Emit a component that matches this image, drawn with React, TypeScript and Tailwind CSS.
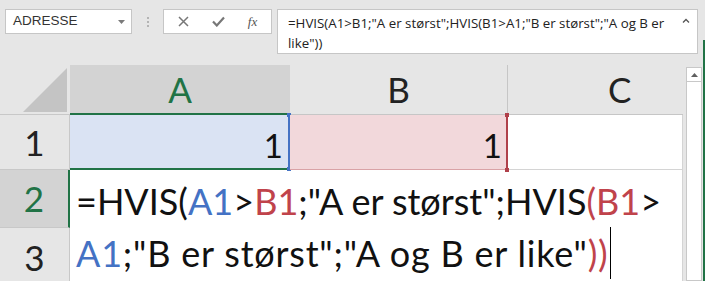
export default function App() {
  const blue = "text-[#4472c4]";
  const red = "text-[#c0434b]";

  return (
    <div className="flex h-[281px] w-[705px] overflow-hidden bg-[#e6e6e6] font-['Lato',sans-serif]">
      <div className="flex w-[703px] flex-col">
        {/* formula bar */}
        <div className="flex h-[65px] shrink-0 items-start pl-[5px] pt-[9px]">
          <div className="flex h-[25px] w-[127px] items-center justify-between border border-[#c6c6c6] bg-white pl-[7px] pr-[6px] font-['Liberation_Sans',sans-serif] text-[13.5px] text-[#333]">
            <span>ADRESSE</span>
            <svg width="7" height="4" viewBox="0 0 7 4">
              <path d="M0 0 L7 0 L3.5 4 Z" fill="#7a7a7a" />
            </svg>
          </div>
          <div className="flex h-[25px] w-[31px] flex-col items-center justify-center gap-[2px]">
            <span className="h-[2px] w-[2px] bg-[#b4b4b4]" />
            <span className="h-[2px] w-[2px] bg-[#b4b4b4]" />
            <span className="h-[2px] w-[2px] bg-[#b4b4b4]" />
          </div>
          <div className="flex h-[25px] w-[109px] items-center border border-[#c6c6c6] bg-white">
            <div className="flex w-[38px] justify-center">
              <svg width="11" height="11" viewBox="0 0 11 11">
                <path d="M1 1 L10 10 M10 1 L1 10" stroke="#777" strokeWidth="1.5" />
              </svg>
            </div>
            <div className="flex w-[32px] justify-center">
              <svg width="13" height="11" viewBox="0 0 13 11">
                <path d="M1 5.5 L4.8 9.5 L12 1.5" stroke="#777" strokeWidth="2.2" fill="none" />
              </svg>
            </div>
            <div className="flex w-[37px] justify-center font-['Liberation_Serif',serif] text-[13px] italic text-[#555]">
              fx
            </div>
          </div>
          <div className="ml-[5px] flex h-[45px] w-[421px] border border-[#c6c6c6] bg-white">
            <div className="flex-1 whitespace-nowrap pl-[10px] pt-[3px] font-['Open_Sans',sans-serif] text-[13.3px] leading-[20px] text-[#222]">
              <div>=HVIS(A1&gt;B1;"A er størst";HVIS(B1&gt;A1;"B er størst";"A og B er</div>
              <div>like"))</div>
            </div>
            <div className="flex w-[22px] justify-center pt-[8px]">
              <svg width="8" height="5" viewBox="0 0 8 5">
                <path d="M1 4.5 L4 1.5 L7 4.5" stroke="#555" strokeWidth="1.3" fill="none" />
              </svg>
            </div>
          </div>
        </div>

        {/* sheet */}
        <div className="flex flex-1">
          <div className="grid h-[216px] w-[683px] grid-cols-[70px_220px_218px_175px] grid-rows-[50px_55px_58px_58px] overflow-hidden bg-white">
            {/* header row */}
            <div className="flex items-end justify-end border-b border-[#c8c8c8] bg-[#e6e6e6] pb-[2px] pr-[3px]">
              <svg width="44" height="44" viewBox="0 0 44 44">
                <path d="M0 44 L44 0 L44 44 Z" fill="#c4c4c4" />
              </svg>
            </div>
            <div className="flex items-center justify-center border-b-2 border-[#217346] bg-[#d3d3d3] text-[35px] text-[#217346]">
              A
            </div>
            <div className="flex items-center justify-center border-b border-r border-[#c6c6c6] bg-[#e6e6e6] text-[35px] text-[#222]">
              B
            </div>
            <div className="flex items-center border-b border-[#c6c6c6] bg-[#e6e6e6] pl-[100px] text-[35px] text-[#222]">
              C
            </div>

            {/* row 1 */}
            <div className="flex items-center justify-center border-b border-r border-[#c8c8c8] bg-[#e6e6e6] text-[35px] text-[#222]">
              1
            </div>
            <div className="relative flex items-end justify-end border-b-2 border-r-2 border-b-[#217346] border-r-[#4472c4] bg-[#dae3f3] pb-[6px] pr-[5px] text-[33px] leading-none text-[#111]">
              1
              <span className="absolute -right-[3px] -top-[2px] h-[4px] w-[4px] bg-[#4472c4]" />
              <span className="absolute -bottom-[3px] -right-[3px] h-[4px] w-[4px] bg-[#4472c4]" />
            </div>
            <div className="relative flex items-end justify-end border-b border-r-2 border-b-[#d9a2a6] border-r-[#b0404a] bg-[#f2d8db] pb-[7px] pr-[4px] text-[33px] leading-none text-[#111]">
              1
              <span className="absolute -right-[3px] -top-[2px] h-[4px] w-[4px] bg-[#b0404a]" />
              <span className="absolute -bottom-[3px] -right-[3px] h-[4px] w-[4px] bg-[#b0404a]" />
            </div>
            <div className="border-b border-r border-[#d4d4d4] bg-white" />

            {/* rows 2-3 */}
            <div className="flex items-center justify-center border-b border-r-2 border-b-[#c8c8c8] border-r-[#217346] bg-[#d3d3d3] text-[35px] text-[#217346]">
              2
            </div>
            <div className="col-span-3 row-span-2 border-r border-[#d4d4d4] bg-white pl-[6px] pt-[5px] text-[36px] leading-[52px] text-[#111]">
              <div className="whitespace-nowrap">
                =HVIS(<span className={blue}>A1</span>&gt;<span className={red}>B1</span>;"A er størst";HVIS
                <span className={red}>(B1</span>&gt;
              </div>
              <div className="whitespace-nowrap tracking-[0.8px]">
                <span className={blue}>A1</span>;"B er størst";"A og B er like"
                <span className={red}>))</span>
                <span className="ml-[2px] inline-block h-[52px] w-px bg-black align-top" />
              </div>
            </div>
            <div className="flex items-center justify-center border-r border-[#c8c8c8] bg-[#e6e6e6] text-[35px] text-[#222]">
              3
            </div>
          </div>

          {/* scrollbar */}
          <div className="flex w-[20px] flex-col">
            <div className="flex h-[216px] pl-[3px] pt-[2px]">
              <div className="flex w-[16px] flex-col border border-[#c8c8c8] bg-white">
                <div className="flex h-[14px] items-center justify-center border-b border-[#c8c8c8]">
                  <svg width="7" height="4" viewBox="0 0 7 4">
                    <path d="M0 4 L3.5 0 L7 4 Z" fill="#606060" />
                  </svg>
                </div>
              </div>
            </div>
          </div>
        </div>
      </div>
      <div className="flex w-[2px] flex-col">
        <div className="h-[40px]" />
        <div className="flex-1 bg-[#217346]" />
      </div>
    </div>
  );
}
